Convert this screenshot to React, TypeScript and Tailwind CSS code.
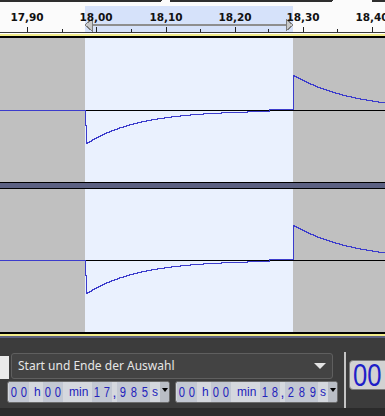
import React from 'react';

const SEL_L = 85;
const SEL_R = 293;

const majors = [
  { x: 27, t: '17,90' },
  { x: 96, t: '18,00' },
  { x: 166, t: '18,10' },
  { x: 235, t: '18,20' },
  { x: 303, t: '18,30' },
  { x: 372, t: '18,40' },
];
const minors = [62, 131, 200, 268, 337];

// stepped waveform: zero, drop at selection start, decay, jump at selection end
function wave(c: number) {
  const d: string[] = [`M0 ${c + 0.5}`, `H${SEL_L + 0.5}`, `V${c + 15.5}`, `H${SEL_L + 1.5}`];
  let prev = c + 33;
  d.push(`V${prev + 0.5}`);
  for (let x = SEL_L + 2; x < SEL_R; x++) {
    let y = Math.round(c + 33 * Math.exp(-(x - 86) / 52));
    if (x > 268) y = c - 1;
    if (y !== prev) {
      d.push(`H${x + 0.5}`, `V${y + 0.5}`);
      prev = y;
    }
  }
  d.push(`H${SEL_R + 0.5}`);
  prev = c - 35;
  d.push(`V${prev + 0.5}`);
  for (let x = SEL_R + 1; x <= 385; x++) {
    const y = Math.round(c - 35 * Math.exp(-(x - SEL_R) / 60));
    if (y !== prev) {
      d.push(`H${x + 0.5}`, `V${y + 0.5}`);
      prev = y;
    }
  }
  d.push('H385');
  return d.join(' ');
}

function Ruler() {
  return (
    <svg width={385} height={32} className="block" shapeRendering="crispEdges">
      <rect width={385} height={32} fill="#fbfbfb" />
      <rect x={0} y={-3} width={162} height={5} rx={2} fill="#2e2e2e" />
      <rect x={170} y={-3} width={163} height={5} rx={2} fill="#2e2e2e" />
      <rect x={372} y={-3} width={20} height={5} rx={2} fill="#2e2e2e" />
      <rect x={SEL_L} y={6} width={SEL_R - SEL_L} height={26} fill="#d6e2fa" />
      {majors.map((m) => (
        <line key={m.t} x1={m.x + 0.5} x2={m.x + 0.5} y1={27} y2={32} stroke="#222" />
      ))}
      {minors.map((x) => (
        <line key={x} x1={x + 0.5} x2={x + 0.5} y1={29} y2={32} stroke="#222" />
      ))}
      <rect x={92} y={24} width={194} height={2} fill="#8e8e8e" />
      <polygon points="85,25 92,19 92,31" fill="#c9c9c9" stroke="#7c7c7c" />
      <polygon points="293,25 286,19 286,31" fill="#c9c9c9" stroke="#7c7c7c" />
      {majors.map((m) => (
        <text key={m.t} x={m.x} y={20.5} textAnchor="middle" fontFamily="DejaVu Sans" fontWeight="bold"
          fontSize={10.5} fill="#111" shapeRendering="auto">
          {m.t}
        </text>
      ))}
    </svg>
  );
}

function Track({ h, c }: { h: number; c: number }) {
  return (
    <svg width={385} height={h} className="block" shapeRendering="crispEdges">
      <rect width={385} height={h} fill="#c0c0c0" />
      <rect x={SEL_L} width={SEL_R - SEL_L} height={h} fill="#eaf1fe" />
      <line x1={0} x2={385} y1={c + 0.5} y2={c + 0.5} stroke="#000" />
      <path d={wave(c)} fill="none" stroke="#3c3ccc" />
    </svg>
  );
}

function Digits({ v, w }: { v: string; w: string }) {
  return (
    <div className="flex h-full bg-[#c3c8d3]">
      {v.split('').map((ch, i) => (
        <span key={i} className={`${w} flex items-center justify-center`}>
          <span className="inline-block scale-x-[0.8]">{ch}</span>
        </span>
      ))}
    </div>
  );
}

function TimeCtl({ m, s1, s2 }: { m: string; s1: string; s2: string }) {
  return (
    <div className="flex h-[22px] w-[163px] items-stretch rounded-[3px] border border-[#6b6b6b] bg-[#d5d8de] pl-px text-[#2323bb] font-['Liberation_Sans',sans-serif] text-[14px] leading-none">
      <Digits v="00" w="w-[10px]" />
      <span className="w-[14px] pl-[5px] flex items-center text-[12px]">h</span>
      <Digits v={m} w="w-[10px]" />
      <span className="w-[29px] pl-[6px] flex items-center text-[12px]">min</span>
      <Digits v={s1} w="w-[10px]" />
      <span className="w-[5px] flex items-center justify-center">,</span>
      <Digits v={s2} w="w-[11px]" />
      <span className="w-[10px] flex items-center justify-center text-[12px]">s</span>
      <div className="w-[9px] bg-[#b9bdc5] flex justify-center rounded-r-[2px]">
        <div className="mt-[6px] h-0 w-0 border-x-[3px] border-t-[4px] border-x-transparent border-t-black" />
      </div>
    </div>
  );
}

function Toolbar() {
  return (
    <div className="flex h-[70px] bg-[#3c3c3c]">
      <div className="flex flex-col w-[338px]">
        <div className="flex mt-[15px]">
          <div className="w-[9px] h-[23px] mt-[3px] bg-[#e9e9e9]" />
          <div className="ml-[2px] w-[322px] h-[26px] rounded-[3px] border border-[#5f5f5f] bg-[#434343] flex items-center justify-between pl-[6px] pr-[6px]">
            <span className="font-['Noto_Sans',sans-serif] text-[12px] text-[#e6e6e6]">Start und Ende der Auswahl</span>
            <div className="h-0 w-0 border-x-[6px] border-t-[6px] border-x-transparent border-t-[#e4e4e4]" />
          </div>
        </div>
        <div className="flex gap-[5px] ml-[7px] mt-[2px]">
          <TimeCtl m="00" s1="17" s2="985" />
          <TimeCtl m="00" s1="18" s2="289" />
        </div>
      </div>
      <div className="ml-[6px] mt-[14px] w-[9px] h-[56px] border-x border-[#c4c4c4] bg-[repeating-linear-gradient(to_bottom,#dcdcdc_0px,#dcdcdc_2px,#9c9c9c_2px,#9c9c9c_3px)]" />
      <div className="ml-[3px] mt-[22px] h-[30px] w-[60px] rounded-[4px] border border-[#7a7a7a] bg-[#d2d2d2] pl-[3px] font-['Liberation_Sans',sans-serif] text-[32px] leading-[29px] text-[#1f1fc8]">
        <span className="inline-block origin-left scale-x-[0.8]">00</span>
      </div>
    </div>
  );
}

export default function App() {
  return (
    <div className="w-[385px] h-[416px] overflow-hidden flex flex-col bg-[#3c3c3c]">
      <Ruler />
      <div className="h-px bg-[#3a3a3a]" />
      <div className="h-px bg-white" />
      <div className="h-[2px] bg-[#f2ec8a]" />
      <div className="h-[2px] bg-black" />
      <Track h={144} c={72} />
      <div className="h-px bg-black" />
      <div className="h-[5px] bg-[#5c6182]" />
      <div className="h-px bg-black" />
      <Track h={143} c={71} />
      <div className="h-[2px] bg-black" />
      <div className="h-[2px] bg-[#f2ec8a]" />
      <div className="h-[2px] bg-[#5c6182]" />
      <Toolbar />
      <div className="h-[8px] bg-[#2b2b2b]" />
    </div>
  );
}
